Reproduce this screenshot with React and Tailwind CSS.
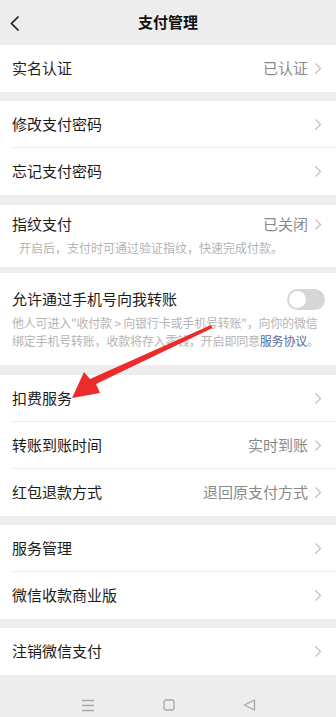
import React, { useState } from 'react';

const font = { fontFamily: '"Noto Sans CJK SC", "Noto Sans", sans-serif' };

function Chevron(){
  return (
    <svg width="8" height="13" viewBox="0 0 8 13" className="ml-[6px] shrink-0">
      <path d="M1.5 1.5 L6.5 6.5 L1.5 11.5" fill="none" stroke="#c4c4c4" strokeWidth="1.4" />
    </svg>
  );
}

// una fila simple con titulo y valor opcional
function Row({ title, value, last }){
  return (
    <div className="relative h-[47px] flex items-center pl-[12px] pr-[14px]">
      <span className="flex-1 text-[15px] text-[#1b1b1b]">{title}</span>
      {value && <span className="text-[15px] text-[#8a8a8a]">{value}</span>}
      <Chevron />
      {!last && <div className="absolute left-[12px] right-0 bottom-0 h-px bg-[#ececec]" />}
    </div>
  );
}

function Section({ children }){
  return <div className="bg-white">{children}</div>;
}

export default function App(){
  const [on,setOn]=useState(false);
  return (
    <div className="relative w-[336px] h-[717px] bg-[#ededed] overflow-hidden flex flex-col" style={font}>
      {/* Cabecera */}
      <div className="relative h-[45px] flex items-center justify-center">
        <svg width="12" height="18" viewBox="0 0 12 18" className="absolute left-[9px] top-[15px]">
          <path d="M9.5 1.5 L2.5 8.5 L9.5 15.5" fill="none" stroke="#222" strokeWidth="1.7" />
        </svg>
        <span className="text-[15px] font-semibold text-[#111]">支付管理</span>
      </div>

      <Section><Row title="实名认证" value="已认证" last /></Section>
      <div className="h-[9px]" />
      <Section>
        <Row title="修改支付密码" />
        <Row title="忘记支付密码" last />
      </Section>
      <div className="h-[10px]" />
      <Section>
        <div className="h-[62px] pl-[12px] pr-[14px] pt-[7px]">
          <div className="flex items-center h-[24px]">
            <span className="flex-1 text-[15px] text-[#1b1b1b]">指纹支付</span>
            <span className="text-[15px] text-[#8a8a8a]">已关闭</span>
            <Chevron />
          </div>
          <div className="pl-[7px] mt-[3px] text-[12px] leading-[18px] text-[#b4b4b4]">开启后，支付时可通过验证指纹，快速完成付款。</div>
        </div>
      </Section>
      <div className="h-[6px]" />
      <Section>
        <div className="h-[92px] pl-[12px] pr-[11px] pt-[14px]">
          <div className="flex items-center h-[24px]">
            <span className="flex-1 text-[15px] text-[#1b1b1b]">允许通过手机号向我转账</span>
            <button onClick={()=>setOn(v=>!v)} className={`w-[38px] h-[21px] rounded-full p-[2px] flex ${on? 'bg-[#07c160] justify-end':'bg-[#d6d6d6] justify-start'}`}>
              <span className="w-[17px] h-[17px] rounded-full bg-white block" />
            </button>
          </div>
          <div className="mt-[3px] text-[12px] leading-[18px] text-[#b4b4b4] tracking-[-0.2px]">
            他人可进入"收付款 &gt; 向银行卡或手机号转账"，向你的微信绑定手机号转账，收款将存入零钱，开启即同意<span className="text-[#576b95]">服务协议</span>。
          </div>
        </div>
      </Section>
      <div className="h-[10px]" />
      <Section>
        <Row title="扣费服务" />
        <Row title="转账到账时间" value="实时到账" />
        <Row title="红包退款方式" value="退回原支付方式" last />
      </Section>
      <div className="h-[9px]" />
      <Section>
        <Row title="服务管理" />
        <Row title="微信收款商业版" last />
      </Section>
      <div className="h-[9px]" />
      <Section><Row title="注销微信支付" last /></Section>

      {/* Barra de navegación */}
      <div className="flex-1 flex items-center justify-center gap-[68px] pt-[18px]">
        <svg width="14" height="13" viewBox="0 0 14 13">
          <path d="M1 1.5 H13 M1 6.5 H13 M1 11.5 H13" stroke="#a8a8a8" strokeWidth="1.3" />
        </svg>
        <svg width="12" height="12" viewBox="0 0 12 12">
          <rect x="1" y="1" width="10" height="10" rx="2" fill="none" stroke="#a8a8a8" strokeWidth="1.3" />
        </svg>
        <svg width="13" height="12" viewBox="0 0 13 12">
          <path d="M1.5 6 L11.5 1 V11 Z" fill="none" stroke="#a8a8a8" strokeWidth="1.3" strokeLinejoin="round" />
        </svg>
      </div>

      {/* Flecha roja */}
      <svg className="absolute left-0 top-0 pointer-events-none" width="336" height="717" viewBox="0 0 336 717">
        <polygon points="211,325 212.5,328 96,384 100,393 72,398 84,372 90,379" fill="#ee2b2b" />
      </svg>
    </div>
  );
}
